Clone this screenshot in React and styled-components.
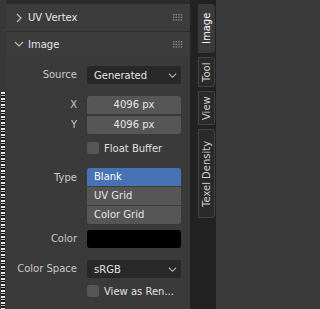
import React from 'react';
import styled, { createGlobalStyle } from 'styled-components';

const GlobalStyle = createGlobalStyle`
  html, body {
    margin: 0;
    padding: 0;
    background: #3a3a3a;
  }
  body {
    font-family: "DejaVu Sans", "Liberation Sans", sans-serif;
    font-size: 10px;
    color: #e0e0e0;
  }
`;

const ChevronRight = () => (
  <svg width="10" height="10" viewBox="0 0 10 10">
    <polyline points="3,1 7,5 3,9" fill="none" stroke="#bdbdbd" strokeWidth="1.2" />
  </svg>
);

const ChevronDown = ({ size = 10 }) => (
  <svg width={size} height={size} viewBox="0 0 10 10">
    <polyline points="1,3 5,7 9,3" fill="none" stroke="#bdbdbd" strokeWidth="1.2" />
  </svg>
);

const Grip = () => (
  <svg width="10" height="7" viewBox="0 0 10 7">
    {[0, 1, 2].map((r) =>
      [0, 1, 2, 3].map((c) => (
        <rect key={`${r}-${c}`} x={c * 2.6} y={r * 2.6} width="1.4" height="1.4" fill="#8a8a8a" />
      ))
    )}
  </svg>
);

const App = () => {
  return (
    <>
      <GlobalStyle />
      <Frame>
        <Edge>
          <Dots />
        </Edge>

        <Main>
          <TopStrip />

          <PanelHeader $height={27} $divider>
            <ChevronRight />
            <HeaderTitle>UV Vertex</HeaderTitle>
            <Grip />
          </PanelHeader>

          <PanelHeader $height={24}>
            <ChevronDown />
            <HeaderTitle>Image</HeaderTitle>
            <Grip />
          </PanelHeader>

          <Body>
            <Row $mt={10}>
              <Label>Source</Label>
              <Dropdown>
                <span>Generated</span>
                <ChevronDown size={9} />
              </Dropdown>
            </Row>

            <Row $mt={12}>
              <Label>X</Label>
              <NumberField $top>4096 px</NumberField>
            </Row>
            <Row $mt={2}>
              <Label>Y</Label>
              <NumberField $bottom>4096 px</NumberField>
            </Row>

            <CheckRow $mt={6}>
              <span />
              <CheckLabel>
                <Checkbox />
                <span>Float Buffer</span>
              </CheckLabel>
            </CheckRow>

            <EnumRow $mt={12}>
              <Label $pad={1}>Type</Label>
              <EnumList>
                <EnumItem $active>Blank</EnumItem>
                <EnumItem>UV Grid</EnumItem>
                <EnumItem $last>Color Grid</EnumItem>
              </EnumList>
            </EnumRow>

            <Row $mt={6}>
              <Label>Color</Label>
              <Swatch />
            </Row>

            <Row $mt={12}>
              <Label>Color Space</Label>
              <Dropdown>
                <span>sRGB</span>
                <ChevronDown size={9} />
              </Dropdown>
            </Row>

            <CheckRow $mt={5}>
              <span />
              <CheckLabel>
                <Checkbox />
                <span>View as Ren...</span>
              </CheckLabel>
            </CheckRow>
          </Body>
        </Main>

        <TabStrip>
          <Tab $active $height={49}>Image</Tab>
          <Tab $height={30}>Tool</Tab>
          <Tab $height={34}>View</Tab>
          <Tab $height={89}>Texel Density</Tab>
        </TabStrip>
      </Frame>
    </>
  );
};

const Frame = styled.div`
  display: flex;
  width: 216px;
  height: 309px;
  overflow: hidden;
  background: #3a3a3a;
`;

const Edge = styled.div`
  width: 6px;
  display: flex;
  flex-direction: column;
  padding-top: 92px;
  background: #383838;
`;

const Dots = styled.div`
  flex: 1;
  margin-left: 1px;
  width: 4px;
  background: repeating-linear-gradient(
    to bottom,
    #e8e8e8 0 2px,
    #111 2px 3px,
    #bdbdbd 3px 4px,
    #1a1a1a 4px 6px
  );
`;

const Main = styled.div`
  flex: 1;
  display: flex;
  flex-direction: column;
  background: #3a3a3a;
`;

const TopStrip = styled.div`
  height: 4px;
  background: #2b2b2b;
`;

const PanelHeader = styled.div`
  display: flex;
  align-items: center;
  gap: 4px;
  height: ${(p) => p.$height}px;
  padding: 0 7px 0 8px;
  background: #3c3c3c;
  border-bottom: ${(p) => (p.$divider ? '1px solid #2c2c2c' : 'none')};
`;

const HeaderTitle = styled.span`
  flex: 1;
  color: #e6e6e6;
  font-size: 10px;
`;

const Body = styled.div`
  display: flex;
  flex-direction: column;
`;

const Row = styled.div`
  display: grid;
  grid-template-columns: 71px 94px;
  column-gap: 10px;
  align-items: center;
  height: 18px;
  margin-top: ${(p) => p.$mt || 0}px;
`;

const CheckRow = styled(Row)`
  height: 16px;
`;

const EnumRow = styled(Row)`
  height: auto;
  align-items: start;
`;

const Label = styled.div`
  text-align: right;
  color: #c9c9c9;
  white-space: nowrap;
  line-height: 18px;
  padding-top: ${(p) => p.$pad || 0}px;
`;

const Dropdown = styled.div`
  display: flex;
  align-items: center;
  justify-content: space-between;
  height: 18px;
  padding: 0 4px 0 7px;
  background: #282828;
  border-radius: 3px;
  color: #e4e4e4;
`;

const NumberField = styled.div`
  height: 18px;
  line-height: 18px;
  text-align: center;
  background: #565656;
  color: #e6e6e6;
  border-radius: ${(p) => (p.$top ? '3px 3px 0 0' : p.$bottom ? '0 0 3px 3px' : '3px')};
`;

const CheckLabel = styled.label`
  display: flex;
  align-items: center;
  gap: 5px;
  color: #e0e0e0;
  white-space: nowrap;
`;

const Checkbox = styled.span`
  width: 12px;
  height: 12px;
  border-radius: 3px;
  background: #565656;
`;

const EnumList = styled.div`
  display: flex;
  flex-direction: column;
  background: #565656;
  border-radius: 3px;
  overflow: hidden;
`;

const EnumItem = styled.div`
  height: 18px;
  line-height: 18px;
  padding-left: 7px;
  background: ${(p) => (p.$active ? '#4772b3' : '#565656')};
  color: ${(p) => (p.$active ? '#ffffff' : '#e4e4e4')};
  border-bottom: ${(p) => (p.$last ? 'none' : '1px solid #3e3e3e')};
`;

const Swatch = styled.div`
  height: 18px;
  border-radius: 3px;
  background: #000;
`;

const TabStrip = styled.div`
  width: 26px;
  display: flex;
  flex-direction: column;
  gap: 4px;
  padding-top: 4px;
  background: #222222;
`;

const Tab = styled.div`
  height: ${(p) => p.$height}px;
  margin-left: 8px;
  width: 17px;
  box-sizing: border-box;
  display: flex;
  align-items: center;
  justify-content: center;
  writing-mode: vertical-rl;
  transform: rotate(180deg);
  background: ${(p) => (p.$active ? '#3a3a3a' : '#2a2a2a')};
  border: 1px solid ${(p) => (p.$active ? '#3a3a3a' : '#434343')};
  border-radius: 3px 0 0 3px;
  color: ${(p) => (p.$active ? '#ffffff' : '#d0d0d0')};
  font-size: 10px;
  white-space: nowrap;
`;

export default App;
